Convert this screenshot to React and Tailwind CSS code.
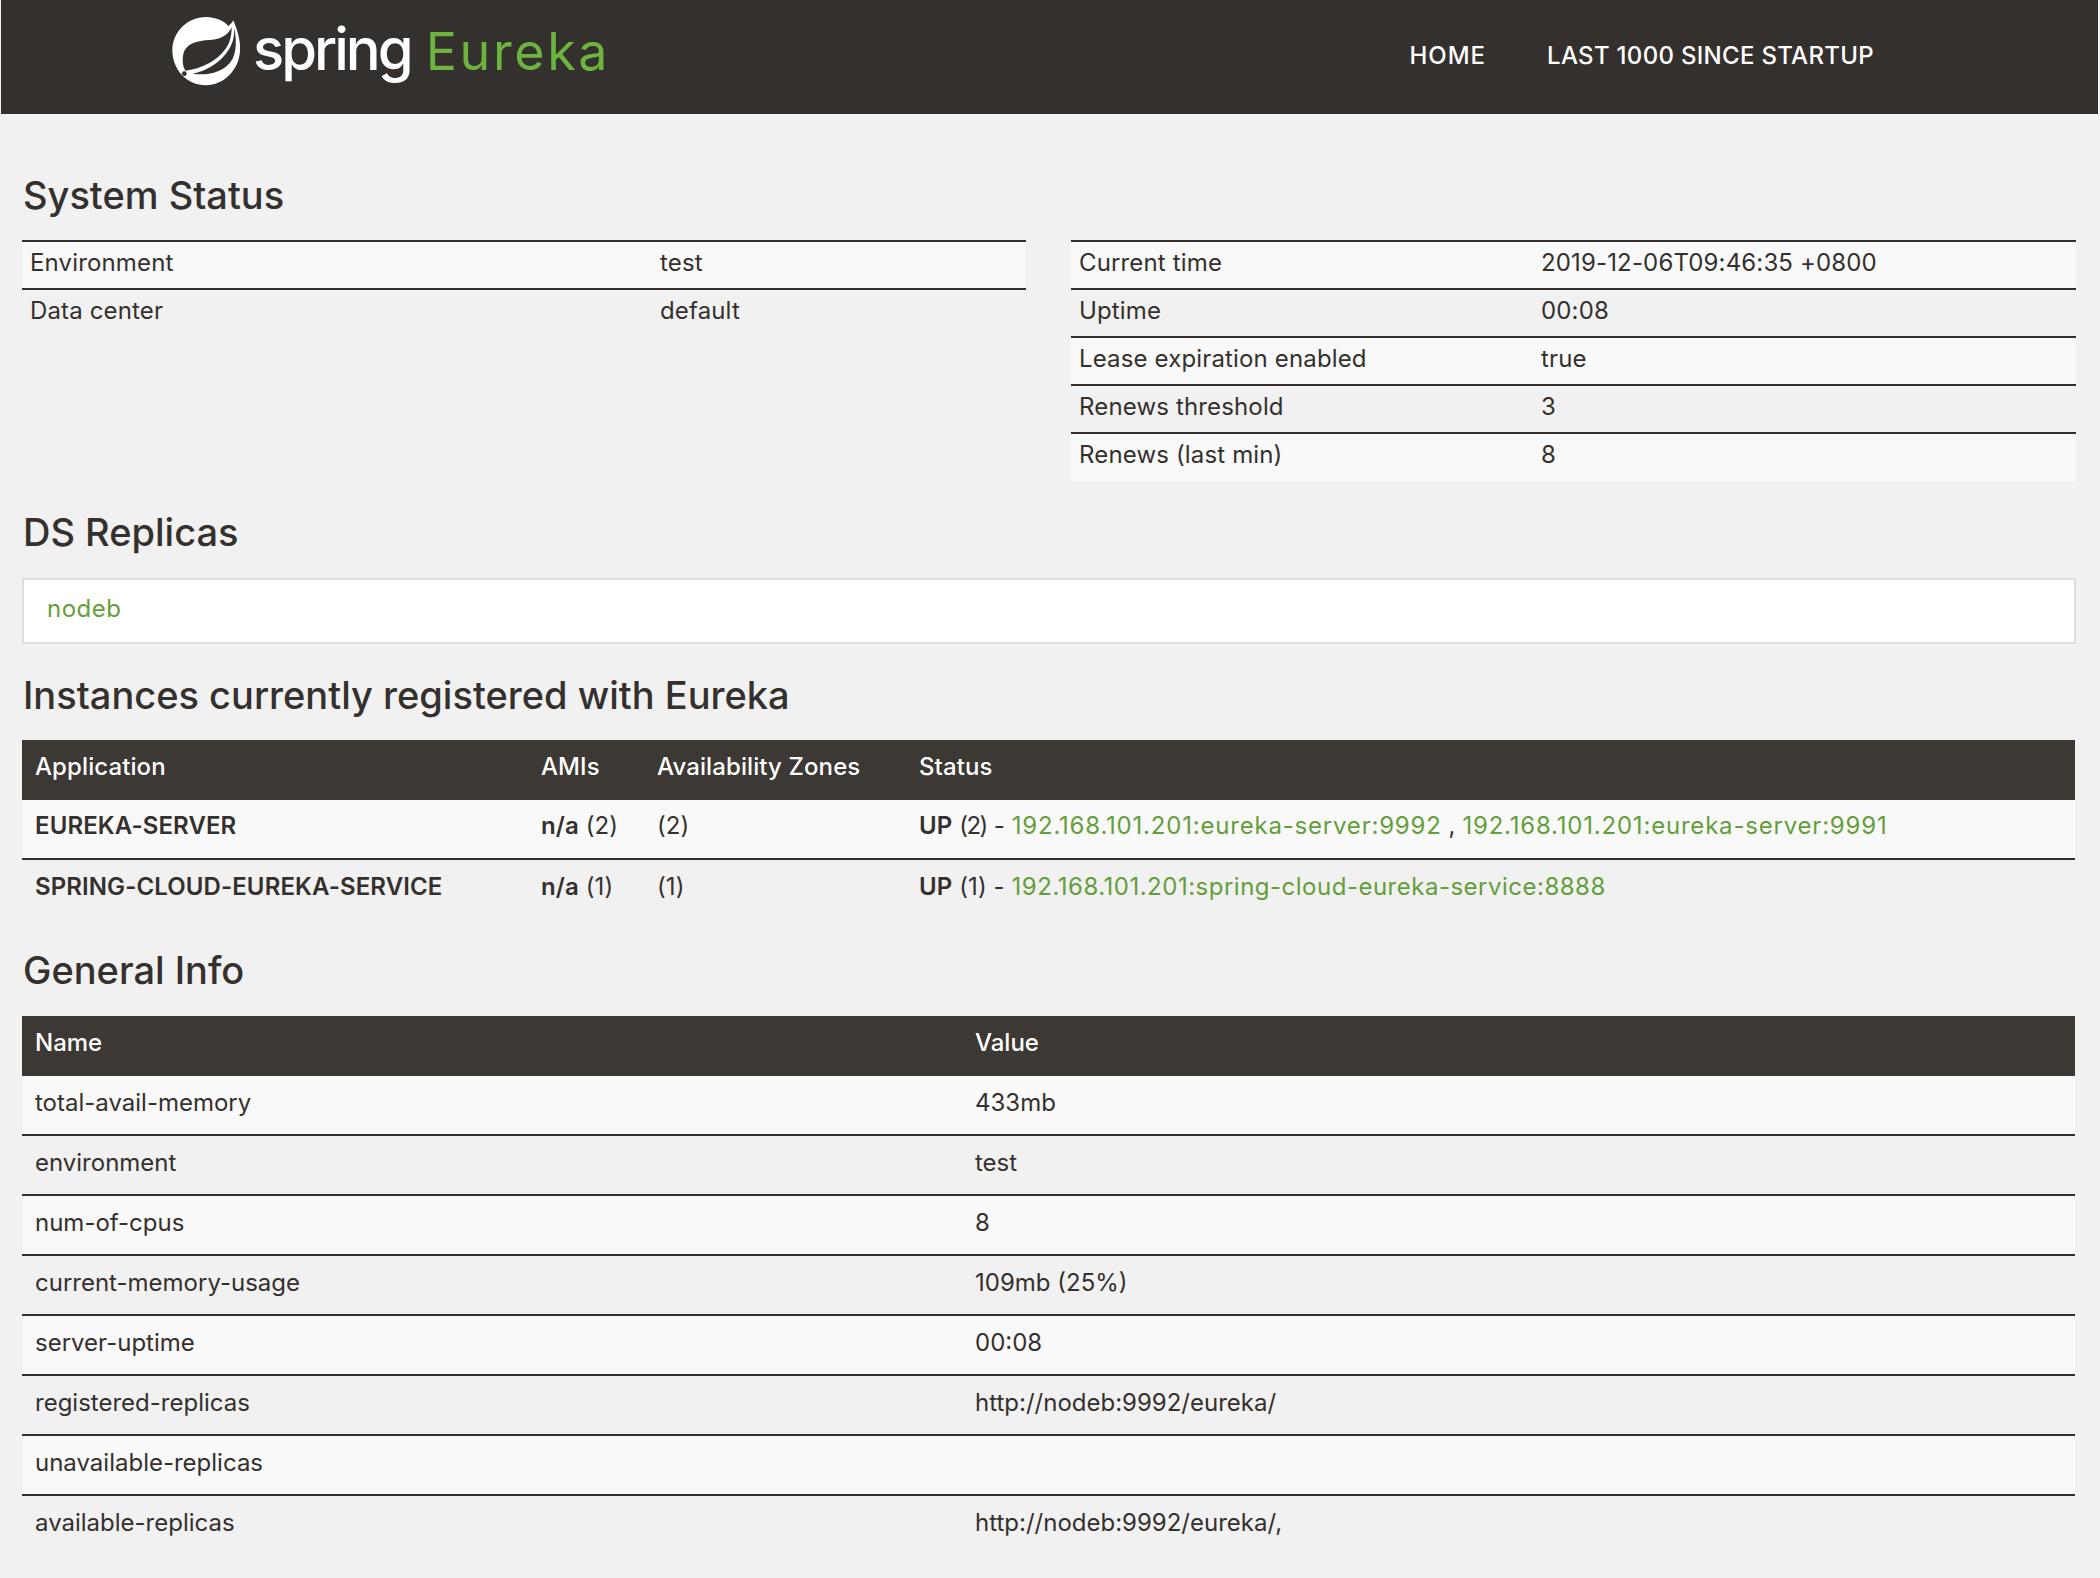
import React from 'react';

const F = "font-['Inter','Liberation_Sans',sans-serif]";

const statusLeft = [
  ['Environment', 'test'],
  ['Data center', 'default'],
];
const statusRight = [
  ['Current time', '2019-12-06T09:46:35 +0800'],
  ['Uptime', '00:08'],
  ['Lease expiration enabled', 'true'],
  ['Renews threshold', '3'],
  ['Renews (last min)', '8'],
];
const generalInfo = [
  ['total-avail-memory', '433mb'],
  ['environment', 'test'],
  ['num-of-cpus', '8'],
  ['current-memory-usage', '109mb (25%)'],
  ['server-uptime', '00:08'],
  ['registered-replicas', 'http://nodeb:9992/eureka/'],
  ['unavailable-replicas', ''],
  ['available-replicas', 'http://nodeb:9992/eureka/,'],
];

const SpringLeaf = () => (
  <svg width="72" height="72" viewBox="63 52 216 216" className="shrink-0">
    <path fill="#fff" d="M250 65C262 95 272 125 270 155C268 215 220 260 168 260C110 260 67 212 67 155C67 100 112 55 168 55C195 55 222 66 235 82C241 78 246 72 250 65Z" />
    <path fill="#34302d" d="M245 86C235 108 215 122 180 124C140 126 108 135 100 165C96 185 98 203 106 216C150 212 215 185 238 130C243 115 245 100 245 86Z" />
    <path fill="#34302d" d="M244 138C225 180 180 215 128 225C170 232 225 222 248 180C262 150 258 110 252 88C254 108 250 125 244 138Z" />
    <circle cx="103" cy="225" r="7" fill="#34302d" />
  </svg>
);

const Heading = ({ children, className }) => (
  <h1 className={`text-[38px] leading-[44px] font-medium text-[#34302d] pl-[22px] ${className}`}>{children}</h1>
);

const KeyValueTable = ({ rows, keyWidth, className }) => (
  <table className={`border-collapse table-fixed text-[24px] tracking-[0.15px] text-[#34302d] ${className}`}>
    <tbody>
      {rows.map(([k, v], i) => (
        <tr key={k} className={`h-[48px] border-t-2 border-[#34302d] ${i % 2 === 0 ? 'bg-[#f9f9f9]' : 'bg-[#f1f1f1]'}`}>
          <td className="pl-[8px] pb-[5px] align-middle" style={{ width: keyWidth }}>{k}</td>
          <td className="pl-[8px] pb-[5px] align-middle">{v}</td>
        </tr>
      ))}
    </tbody>
  </table>
);

const Link = ({ children, wide }) => (
  <a className={`text-[#649e3b] ${wide ? 'tracking-[0.8px]' : 'tracking-[0.5px]'}`}>{children}</a>
);

const App = () => {
  return (
    <div className={`min-h-[1578px] w-full bg-[#f1f1f1] text-[#34302d] pl-px pr-[2px] ${F}`}>
      <nav className="h-[114px] bg-[#34302d] flex items-start">
        <div className="flex items-start ml-[170px] mt-[16px]">
          <SpringLeaf />
          <div className="flex items-baseline -mt-[1px]">
            <span className="ml-[10px] text-[58px] leading-[68px] font-medium text-white tracking-[-3px]">spring</span>
            <span className="ml-[15px] text-[52px] leading-[68px] font-normal text-[#6db33f] tracking-[2.6px]">Eureka</span>
          </div>
        </div>
        <div className="ml-auto mr-[224px] mt-[41px] flex gap-[61px] text-[24px] leading-[30px] tracking-[0.3px] font-medium text-white">
          <span className="tracking-[1px]">HOME</span>
          <span>LAST 1000 SINCE STARTUP</span>
        </div>
      </nav>

      <Heading className="mt-[59px]">System Status</Heading>
      <div className="mt-[23px] flex pl-[21px] pr-[22px] items-start justify-between">
        <KeyValueTable rows={statusLeft} keyWidth="630px" className="w-[1004px]" />
        <KeyValueTable rows={statusRight} keyWidth="462px" className="w-[1005px]" />
      </div>

      <Heading className="mt-[29px]">DS Replicas</Heading>
      <div className="mt-[24px] ml-[21px] mr-[22px] h-[66px] border-2 border-[#dddddd] bg-white flex items-center pl-[23px] pb-[5px] text-[24px]">
        <Link>nodeb</Link>
      </div>

      <Heading className="mt-[29px]">Instances currently registered with Eureka</Heading>
      <div className="mt-[23px] pl-[21px] pr-[23px]">
        <table className="w-full border-collapse table-fixed text-[24px] tracking-[0.1px] text-[#34302d]">
          <thead>
            <tr className="h-[60px] bg-[#3c3834] text-white text-left font-medium">
              <th className="pl-[13px] pb-[7px] w-[506px] font-medium">Application</th>
              <th className="pl-[13px] pb-[7px] w-[116px] font-medium">AMIs</th>
              <th className="pl-[13px] pb-[7px] w-[262px] font-medium">Availability Zones</th>
              <th className="pl-[13px] pb-[7px] font-medium">Status</th>
            </tr>
          </thead>
          <tbody>
            <tr className="h-[59px] bg-[#f9f9f9]">
              <td className="pl-[13px] pb-[6px] font-semibold">EUREKA-SERVER</td>
              <td className="pl-[13px] pb-[6px]"><b className="font-semibold">n/a</b> (2)</td>
              <td className="pl-[13px] pb-[6px]">(2)</td>
              <td className="pl-[13px] pb-[6px]">
                <b className="font-semibold">UP</b> <span className="tracking-[-1.5px]">(2)</span> - <Link wide>192.168.101.201:eureka-server:9992</Link> , <Link wide>192.168.101.201:eureka-server:9991</Link>
              </td>
            </tr>
            <tr className="h-[60px] border-t-2 border-[#34302d] bg-[#f1f1f1]">
              <td className="pl-[13px] pb-[6px] font-semibold">SPRING-CLOUD-EUREKA-SERVICE</td>
              <td className="pl-[13px] pb-[6px]"><b className="font-semibold">n/a</b> (1)</td>
              <td className="pl-[13px] pb-[6px]">(1)</td>
              <td className="pl-[13px] pb-[6px]">
                <b className="font-semibold">UP</b> (1) - <Link>192.168.101.201:spring-cloud-eureka-service:8888</Link>
              </td>
            </tr>
          </tbody>
        </table>
      </div>

      <Heading className="mt-[29px]">General Info</Heading>
      <div className="mt-[24px] pl-[21px] pr-[23px]">
        <table className="w-full border-collapse table-fixed text-[24px] text-[#34302d]">
          <thead>
            <tr className="h-[60px] bg-[#3c3834] text-white text-left">
              <th className="pl-[13px] pb-[6px] w-[940px] font-medium">Name</th>
              <th className="pl-[13px] pb-[6px] font-medium">Value</th>
            </tr>
          </thead>
          <tbody>
            {generalInfo.map(([name, value], i) => (
              <tr key={name} className={`${i > 0 ? 'h-[60px] border-t-2 border-[#34302d]' : 'h-[59px]'} ${i % 2 === 0 ? 'bg-[#f9f9f9]' : 'bg-[#f1f1f1]'}`}>
                <td className="pl-[13px] pb-[5px]">{name}</td>
                <td className="pl-[13px] pb-[5px]">{value}</td>
              </tr>
            ))}
          </tbody>
        </table>
      </div>
    </div>
  );
};

export default App;
